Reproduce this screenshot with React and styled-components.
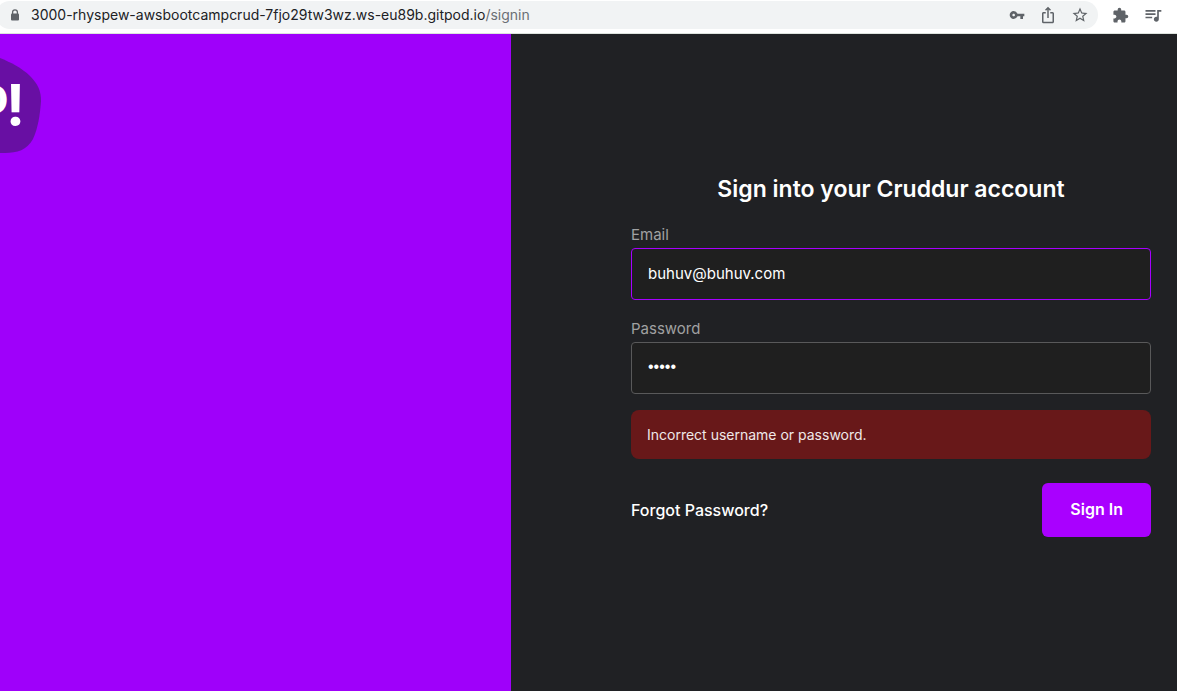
import React, { useState } from "react";
import styled, { createGlobalStyle } from "styled-components";
import {
  MdVpnKey,
  MdIosShare,
  MdStarBorder,
  MdExtension,
  MdQueueMusic,
} from "react-icons/md";

const GlobalStyle = createGlobalStyle`
  *, *::before, *::after { box-sizing: border-box; }
  body {
    margin: 0;
    background: #202124;
    font-family: Inter, "Liberation Sans", sans-serif;
  }
`;

const Page = styled.div`
  display: flex;
  flex-direction: column;
  min-height: 100vh;
  overflow: hidden;
`;

const BrowserBar = styled.header`
  display: flex;
  align-items: flex-start;
  height: 34px;
  padding: 1px 14px 0 0;
  background: #ffffff;
  border-bottom: 1px solid #dde3de;
`;

const AddressPill = styled.div`
  display: flex;
  flex: 1;
  align-items: center;
  min-width: 0;
  height: 28px;
  margin-left: -4px;
  padding: 0 9px 0 14px;
  border-radius: 14px;
  background: #f1f3f4;
  color: #5f6368;
`;

const LockIcon = styled.svg`
  flex: none;
  width: 10px;
  height: 12px;
`;

const Address = styled.span`
  flex: 1;
  margin-left: 11px;
  overflow: hidden;
  white-space: nowrap;
  font-size: 14px;
  line-height: 24px;
  color: #202124;
`;

const AddressPath = styled.span`
  color: #6b6f74;
`;

const Tools = styled.div`
  display: flex;
  align-items: center;
  gap: 14px;
  height: 28px;
`;

const BarTools = styled(Tools)`
  margin-left: 14px;
`;

const ToolButton = styled.button`
  display: flex;
  padding: 0;
  border: 0;
  background: none;
  color: #5f6368;
  cursor: pointer;
`;

const Content = styled.main`
  display: grid;
  flex: 1;
  grid-template-columns: 511fr 666fr;
`;

const BrandPane = styled.section`
  background: #9f00fa;
`;

const Logo = styled.svg`
  display: block;
  width: 48px;
  height: 130px;
  font-family: Inter, "Liberation Sans", sans-serif;
`;

const FormPane = styled.section`
  padding: 138px 26px 32px;
  background: #202124;
`;

const Form = styled.form`
  display: flex;
  flex-direction: column;
  width: 100%;
  max-width: 520px;
  margin-left: auto;
`;

const Title = styled.h1`
  margin: 0 0 16px;
  font-size: 23px;
  font-weight: 600;
  line-height: 34px;
  text-align: center;
  color: #ffffff;
`;

const Field = styled.div`
  display: flex;
  flex-direction: column;
  margin-bottom: 16px;
`;

const Label = styled.label`
  font-size: 15px;
  line-height: 26px;
  color: #a0a1a2;
`;

const Input = styled.input`
  width: 100%;
  height: 52px;
  padding: 0 16px 2px;
  border: 1px solid ${(p) => (p.$active ? "#a600ff" : "#59595a")};
  border-radius: 4px;
  outline: none;
  background: #1f1f1f;
  font-family: inherit;
  font-size: 15px;
  color: #ffffff;

  &[type="password"] {
    font-family: "Liberation Sans", sans-serif;
    font-size: 16px;
  }
`;

const Alert = styled.div`
  padding: 14px 16px;
  border-radius: 8px;
  background: #681819;
  font-size: 14px;
  line-height: 21px;
  color: #f0e8e8;
`;

const Actions = styled.div`
  display: flex;
  align-items: center;
  justify-content: space-between;
  margin-top: 24px;
`;

const ForgotLink = styled.a`
  font-size: 16px;
  font-weight: 500;
  line-height: 24px;
  text-decoration: none;
  color: #ffffff;
`;

const SubmitButton = styled.button`
  height: 54px;
  padding: 0 28px 2px;
  border: 0;
  border-radius: 6px;
  background: #a900ff;
  font-family: inherit;
  font-size: 16px;
  font-weight: 600;
  color: #ffffff;
  cursor: pointer;
`;

export default function App() {
  const [email, setEmail] = useState("buhuv@buhuv.com");
  const [password, setPassword] = useState("buhuv");

  return (
    <Page>
      <GlobalStyle />
      <BrowserBar>
        <AddressPill>
          <LockIcon viewBox="0 0 10 12" aria-hidden="true">
            <path d="M2.6 5V3.2a2.4 2.4 0 0 1 4.8 0V5" fill="none" stroke="#5f6368" strokeWidth="1.3" />
            <rect x="1" y="4.5" width="8" height="7" rx="1" fill="#5f6368" />
          </LockIcon>
          <Address>
            3000-rhyspew-awsbootcampcrud-7fjo29tw3wz.ws-eu89b.gitpod.io
            <AddressPath>/signin</AddressPath>
          </Address>
          <Tools>
            <ToolButton type="button" aria-label="Saved passwords"><MdVpnKey size={16} /></ToolButton>
            <ToolButton type="button" aria-label="Share"><MdIosShare size={18} /></ToolButton>
            <ToolButton type="button" aria-label="Bookmark"><MdStarBorder size={18} /></ToolButton>
          </Tools>
        </AddressPill>
        <BarTools>
          <ToolButton type="button" aria-label="Extensions"><MdExtension size={17} /></ToolButton>
          <ToolButton type="button" aria-label="Media controls"><MdQueueMusic size={20} /></ToolButton>
        </BarTools>
      </BrowserBar>
      <Content>
        <BrandPane>
          <Logo viewBox="0 0 48 130" role="img" aria-label="Cruddur">
            <path
              d="M-10 21 L0 24 C10 28 22 34 30 42 C38 50 41 57 41 67 C40 81 38 94 33 105 C27 116 17 119 5 119 L-10 119Z"
              fill="#680fa3"
            />
            <text x="-20" y="80" fontSize="39" fontWeight="800" fill="#ffffff">D</text>
            <text x="6" y="91" fontSize="56" fontWeight="700" fill="#ffffff">!</text>
          </Logo>
        </BrandPane>
        <FormPane>
          <Form onSubmit={(e) => e.preventDefault()}>
            <Title>Sign into your Cruddur account</Title>
            <Field>
              <Label htmlFor="email">Email</Label>
              <Input
                id="email"
                type="text"
                $active
                value={email}
                onChange={(e) => setEmail(e.target.value)}
              />
            </Field>
            <Field>
              <Label htmlFor="password">Password</Label>
              <Input
                id="password"
                type="password"
                value={password}
                onChange={(e) => setPassword(e.target.value)}
              />
            </Field>
            <Alert role="alert">Incorrect username or password.</Alert>
            <Actions>
              <ForgotLink href="/forgot">Forgot Password?</ForgotLink>
              <SubmitButton type="submit">Sign In</SubmitButton>
            </Actions>
          </Form>
        </FormPane>
      </Content>
    </Page>
  );
}
